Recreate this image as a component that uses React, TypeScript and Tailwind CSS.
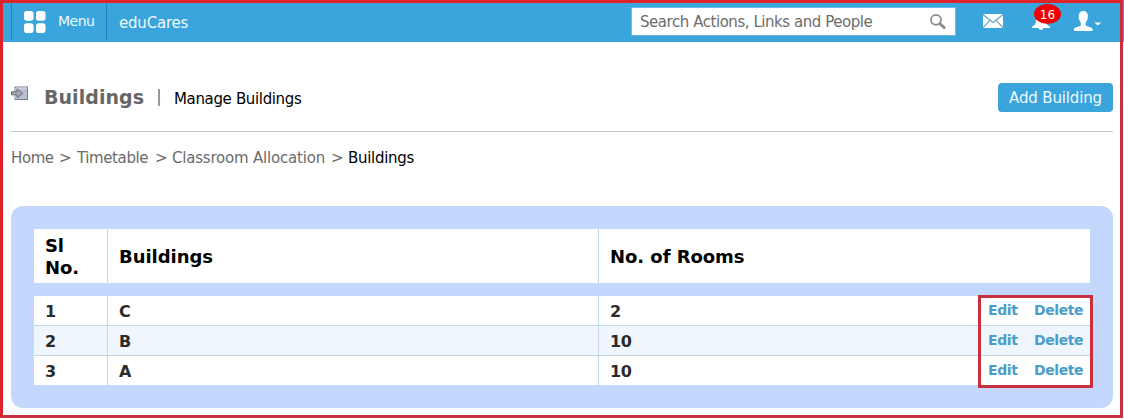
import React from "react";

const rows = [
  { no: "1", name: "C", rooms: "2" },
  { no: "2", name: "B", rooms: "10" },
  { no: "3", name: "A", rooms: "10" },
];

const grid = "grid grid-cols-[73px_491px_1fr]";

function MenuIcon() {
  return (
    <svg width="22" height="22" viewBox="0 0 22 22" fill="#fff">
      <rect x="0" y="0" width="9.5" height="9.8" rx="2.8" />
      <rect x="12" y="0" width="9.5" height="9.8" rx="2.8" />
      <rect x="0" y="12.2" width="9.5" height="9.8" rx="2.8" />
      <rect x="12" y="12.2" width="9.5" height="9.8" rx="2.8" />
    </svg>
  );
}

function SearchIcon() {
  return (
    <svg width="18" height="18" viewBox="0 0 18 18" fill="none" stroke="#8c8c8c">
      <circle cx="7" cy="6.8" r="5" strokeWidth="1.8" />
      <path d="M11 10.8L15.2 14.6" strokeWidth="2.8" strokeLinecap="round" />
    </svg>
  );
}

function MailIcon() {
  return (
    <svg width="20" height="14" viewBox="0 0 20 14">
      <rect width="20" height="14" fill="#fff" />
      <path d="M0 .5L10 8.5L20 .5M0 13.5L7 6.3M20 13.5L13 6.3" fill="none" stroke="#5c9fc6" strokeWidth="1.1" />
    </svg>
  );
}

function BellIcon() {
  return (
    <svg width="18" height="18" viewBox="0 0 18 18" fill="#fff">
      <path d="M9 0C5.5 0 4 3 4 6c0 4-.8 6.300-4 7.500v1.500h18v-1.500c-3.200-1.200-4-3.500-4-7.500 0-3-1.500-6-5-6z" />
      <path d="M6.500 15h5c-.5 1.300-1.300 1.800-2.500 1.800s-2-.5-2.500-1.800z" />
    </svg>
  );
}

function UserIcon() {
  return (
    <svg width="28" height="21" viewBox="0 0 28 21" fill="#fff">
      <path d="M9.300 0C6.400 0 4.600 2 4.600 5.200c0 2.600.8 4.700 2.200 6v3C6.300 16 0 15.500 0 18.200V20h18.500v-1.800c0-2.700-6-2.200-6.800-4v-3c1.300-1.300 2.200-3.400 2.200-6C13.900 2 12.200 0 9.300 0z" />
      <path d="M20.300 11.500h7l-3.500 3z" />
    </svg>
  );
}

function PageIcon() {
  return (
    <svg width="18" height="15" viewBox="0 0 18 15">
      <rect x="4" y="1" width="12.500" height="12.500" fill="#b9bfd0" stroke="#777b8c" />
      <path d="M5 13V2h11" fill="none" stroke="#e4e7ef" />
      <path d="M.5 5.800h5.500V2.800L11.800 7.300L6 11.800V8.800H.5z" fill="#a4a8b5" stroke="#666a78" />
    </svg>
  );
}

export default function App() {
  return (
    <div className="relative h-[419px] w-[1124px] overflow-hidden bg-white font-['DejaVu_Sans',sans-serif] text-[15px] text-black">
      <header className="flex h-[42px] bg-[#3aa4dc] text-[#edfaff]">
        <div className="ml-[11px] flex h-10 w-[96px] border-x border-[#2580b4] pl-3 pt-[11px]">
          <MenuIcon />
          <span className="ml-[12px] whitespace-nowrap text-[14px] leading-5 tracking-[-0.5px]">Menu</span>
        </div>
        <span className="ml-[12px] mt-[13px] whitespace-nowrap leading-5 tracking-[-0.2px]">eduCares</span>
        <div className="ml-auto mt-[7px] flex h-[29px] w-[325px] items-center justify-between border border-[#6bbbe5] bg-white pl-2 pr-2 text-[#6c6c6c]">
          <span className="whitespace-nowrap pt-[2px] tracking-[-0.45px]">Search Actions, Links and People</span>
          <SearchIcon />
        </div>
        <div className="ml-[27px] mt-[14px]"><MailIcon /></div>
        <div className="relative ml-[29px] mt-[13px] h-[18px] w-[18px]">
          <BellIcon />
          <span className="absolute -top-[9px] left-[2px] flex h-5 w-[27px] items-center justify-center rounded-[50%] bg-[#ee0000] pt-px text-[12px] leading-none text-white">16</span>
        </div>
        <div className="ml-[24px] mr-[22px] mt-[11px]"><UserIcon /></div>
      </header>

      <div className="mx-[11px] flex h-[90px] border-b border-[#c9c9c9] pt-[41px]">
        <div className="mt-[3px]"><PageIcon /></div>
        <h1 className="ml-[15px] w-[100px] whitespace-nowrap text-[19px] font-bold leading-7 tracking-[0.05px] text-[#666]">Buildings</h1>
        <div className="ml-[14px] mt-[6px] h-[17px] w-[2px] bg-[#999]" />
        <span className="ml-[14px] mt-[6px] whitespace-nowrap leading-5 tracking-[-0.35px]">Manage Buildings</span>
        <button className="ml-auto flex h-[29px] w-[115px] items-center justify-center whitespace-nowrap rounded-[4px] bg-[#3aa4dc] pt-[2px] tracking-[-0.15px] text-[#edfaff]">Add Building</button>
      </div>

      <nav className="ml-[11px] mt-[16px] flex h-5 gap-[6px] whitespace-nowrap leading-5 tracking-[-0.2px] text-[#6b6b6b]">
        <span className="w-[42px] tracking-[-0.4px]">Home</span>
        <span className="w-3">&gt;</span>
        <span className="w-[72px] tracking-[-0.4px]">Timetable</span>
        <span className="w-[11px]">&gt;</span>
        <span className="w-[153px]">Classroom Allocation</span>
        <span className="w-[11px]">&gt;</span>
        <span className="tracking-[-0.3px] text-black">Buildings</span>
      </nav>

      <main className="mx-[11px] mt-[38px] h-[202px] rounded-[12px] bg-[#c4d8fe] px-[23px] pt-[23px]">
        <div className={`${grid} h-[54px] bg-white text-[18px] font-bold leading-[22px]`}>
          <div className="pl-[11px] pt-[6px] tracking-[-0.1px]">Sl<br />No.</div>
          <div className="flex items-center border-l border-[#c3d9e8] pl-[11px] pt-px tracking-[-0.05px]">Buildings</div>
          <div className="flex items-center border-l border-[#c3d9e8] pl-[11px] pt-px tracking-[-0.05px]">No. of Rooms</div>
        </div>
        <div className="mt-[13px]">
          {rows.map((r, i) => (
            <div
              key={r.no}
              className={`${grid} text-[16px] font-bold text-[#2b2b2b] ${i === 1 ? "bg-[#f0f6fe]" : "bg-white"} ${i < 2 ? "h-[30px] border-b border-[#c3d9e8]" : "h-[29px]"}`}
            >
              <div className="flex items-center pl-[11px] pt-[2px]">{r.no}</div>
              <div className="flex items-center border-l border-[#c3d9e8] pl-[11px] pt-[2px]">{r.name}</div>
              <div className="flex items-center border-l border-[#c3d9e8] pl-[11px]">
                <span className="pt-[2px] tracking-[-0.4px]">{r.rooms}</span>
                <span className="ml-auto flex text-[14px] text-[#4a9dc9]">
                  <a className="w-[46px] tracking-[-0.4px]">Edit</a>
                  <a className="w-[56px] tracking-[-0.4px]">Delete</a>
                </span>
              </div>
            </div>
          ))}
        </div>
      </main>

      <div className="pointer-events-none absolute left-[978px] top-[295px] h-[93px] w-[115px] border-[3px] border-[#c7303c]" />
      <div className="pointer-events-none absolute left-0 top-0 h-[418px] w-[1123px] border-[3px] border-b-[#c7303c] border-l-[#e0222b] border-r-[#c7303c] border-t-[#e0222b]" />
    </div>
  );
}
